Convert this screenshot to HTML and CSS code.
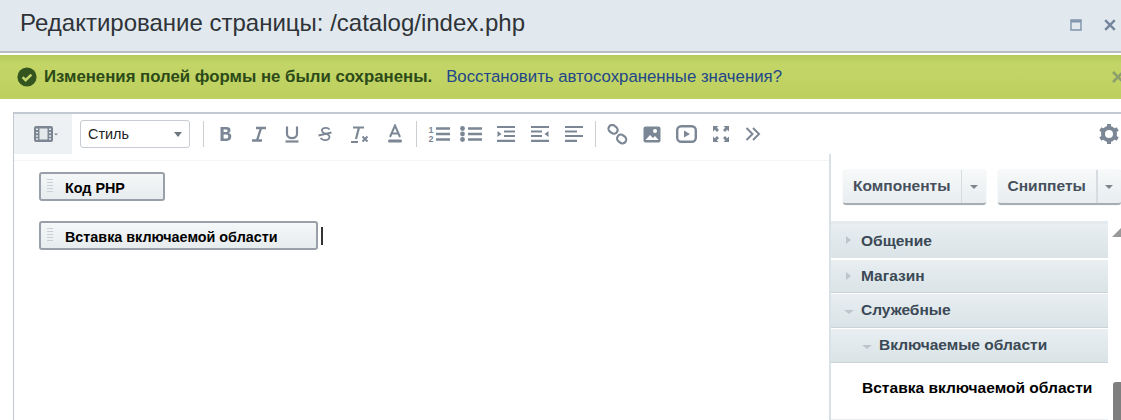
FILE: index.html
```html
<!DOCTYPE html>
<html lang="ru">
<head>
<meta charset="utf-8">
<title>Редактирование страницы</title>
<link rel="stylesheet" href="styles.css">
</head>
<body>
<header class="head">
  <h1 class="title">Редактирование страницы: /catalog/index.php</h1>
  <div class="win">
    <svg width="12" height="12" viewBox="0 0 12 12"><path d="M1 1h10v10H1z" fill="none" stroke="#7f93ad" stroke-width="1.4"/><path d="M1 2.5h10" stroke="#7f93ad" stroke-width="2"/></svg>
    <svg class="win-x" width="12" height="12" viewBox="0 0 12 12"><path d="M1.2 1.2l9.6 9.6M10.8 1.2l-9.6 9.6" stroke="#74859c" stroke-width="2.4"/></svg>
  </div>
</header>
<div class="notify">
  <svg class="ok" width="20" height="20" viewBox="0 0 20 20"><circle cx="10" cy="10" r="9.6" fill="#33541f"/><path d="M5.6 10.2l3 3 5.8-5.6" fill="none" stroke="#c3d56d" stroke-width="2.6"/></svg>
  <b class="msg">Изменения полей формы не были сохранены.</b>
  <a class="restore">Восстановить автосохраненные значения?</a>
  <svg class="nx" width="12" height="12" viewBox="0 0 12 12"><path d="M1 1l10 10M11 1L1 11" stroke="#8d9f6b" stroke-width="2.6"/></svg>
</div>
<main class="editor">
  <div class="toolbar">
    <div class="film">
      <svg width="26" height="18" viewBox="0 0 26 18"><rect x="1" y="1" width="19" height="16" rx="2" fill="#7d8794"/><rect x="6.500" y="3.500" width="8" height="11" fill="#e6e9ec"/><path d="M3 4.200h2M3 7.600h2M3 11h2M3 14h2M16 4.200h2M16 7.600h2M16 11h2M16 14h2" stroke="#e6e9ec" stroke-width="1.400"/><path d="M21 8.500h4l-2 2z" fill="#7d8794"/></svg>
    </div>
    <div class="select"><span>Стиль</span><i class="caret"></i></div>
    <i class="sep s1"></i>
    <div class="tools t1">
      <svg width="16" height="18" viewBox="0 0 16 18"><path d="M2.500 2h6c2.500 0 4 1.200 4 3.200 0 1.400-.7 2.300-1.900 2.700 1.700.3 2.700 1.500 2.700 3.200C13.300 14.400 11.500 16 8.800 16H2.500zM5.600 4.400v2.700h2.400c1 0 1.500-.5 1.500-1.350S9 4.400 8 4.400zM5.600 9.400v4.200h2.800c1.200 0 1.800-.7 1.800-2.100s-.6-2.100-1.800-2.100z" fill="#7c8795" fill-rule="evenodd"/></svg>
      <svg width="16" height="18" viewBox="0 0 16 18"><path d="M5 3h10M1 15.500h10M10 3L6 15.500" stroke="#7c8795" stroke-width="2.400" fill="none"/></svg>
      <svg width="16" height="18" viewBox="0 0 16 18"><path d="M3 1.500v7.500c0 5.500 10 5.500 10 0V1.500" stroke="#7c8795" stroke-width="2.200" fill="none"/><path d="M1.500 16.500h13" stroke="#7c8795" stroke-width="2.200"/></svg>
      <svg width="16" height="18" viewBox="0 0 16 18"><path d="M12.500 4.500C11.500 2.800 8 2.300 6 3.500S4.500 7.500 8 8.500s5.500 2.500 4 5S5.500 15.500 3.500 13M1.500 10.500l13-3" stroke="#7c8795" stroke-width="1.800" fill="none"/></svg>
      <svg width="20" height="18" viewBox="0 0 20 18"><path d="M3 2.500h11M9 2.500L6 14M1 17h7" stroke="#7c8795" stroke-width="2.200" fill="none"/><path d="M12.500 11.500l5 5M17.500 11.500l-5 5" stroke="#7c8795" stroke-width="2"/></svg>
      <svg width="16" height="20" viewBox="0 0 16 20"><path d="M3 13L8 1.500 13 13M4.800 9.500h6.400" stroke="#7c8795" stroke-width="2" fill="none"/><rect x="1" y="15.500" width="14" height="3" rx="1.500" fill="#7c8795"/></svg>
    </div>
    <i class="sep s2"></i>
    <div class="tools t2">
      <svg width="22" height="18" viewBox="0 0 22 18"><path d="M8 3.500h14M8 9h14M8 14.500h14" stroke="#7c8795" stroke-width="2.400"/><text x="0.500" y="8" class="num">1</text><text x="0.500" y="17" class="num">2</text></svg>
      <svg width="22" height="18" viewBox="0 0 22 18"><path d="M8 3.500h14M8 9h14M8 14.500h14" stroke="#7c8795" stroke-width="2.400"/><circle cx="2.500" cy="3.500" r="2.400" fill="#7c8795"/><circle cx="2.500" cy="9" r="2.400" fill="#7c8795"/><circle cx="2.500" cy="14.500" r="2.400" fill="#7c8795"/></svg>
      <svg class="wide" width="20" height="18" viewBox="0 0 20 18"><path d="M1 2h18M8 6.500h11M8 11h11M1 15.800h18" stroke="#7c8795" stroke-width="2.200"/><path d="M1.500 6l4 3-4 3z" fill="#7c8795"/></svg>
      <svg class="wide" width="20" height="18" viewBox="0 0 20 18"><path d="M1 2h18M1 6.500h11M1 11h11M1 15.800h18" stroke="#7c8795" stroke-width="2.200"/><path d="M18.500 6l-4 3 4 3z" fill="#7c8795"/></svg>
      <svg class="wide" width="20" height="18" viewBox="0 0 20 18"><path d="M1 2h18M1 6.500h12M1 11h18M1 15.800h12" stroke="#7c8795" stroke-width="2.200"/></svg>
    </div>
    <i class="sep s3"></i>
    <div class="tools t3">
      <svg width="21" height="21" viewBox="0 0 21 21"><g fill="none" stroke="#7c8795" stroke-width="2.200"><rect x="1.500" y="1.500" width="9.500" height="7.500" rx="3.700" transform="rotate(38 6 5)"/><rect x="10" y="11.500" width="9.500" height="7.500" rx="3.700" transform="rotate(38 15 15)"/></g></svg>
      <svg width="18" height="17" viewBox="0 0 18 17"><rect x="0.500" y="0.500" width="17" height="16" rx="2" fill="#7c8795"/><path d="M2.500 14l4.500-5 3 3 2-2 3.500 4z" fill="#fff"/><circle cx="12" cy="5" r="2" fill="#fff"/></svg>
      <svg width="21" height="18" viewBox="0 0 21 18"><rect x="1.200" y="1.200" width="18.600" height="15.600" rx="4" fill="none" stroke="#7c8795" stroke-width="2.400"/><path d="M8 5.500l6 3.500-6 3.500z" fill="#7c8795"/></svg>
      <svg width="18" height="18" viewBox="0 0 18 18"><path d="M1 1h5.500L4.800 2.800 7 5 5 7 2.800 4.800 1 6.500zM17 1v5.500l-1.800-1.700L13 7l-2-2 2.200-2.200L11.500 1zM1 17v-5.500l1.800 1.700L5 11l2 2-2.200 2.200L6.500 17zM17 17h-5.500l1.700-1.800L11 13l2-2 2.200 2.200 1.800-1.700z" fill="#7c8795"/></svg>
      <svg width="16" height="14" viewBox="0 0 16 14"><path d="M1.500 1l6 6-6 6M8 1l6 6-6 6" fill="none" stroke="#7c8795" stroke-width="2"/></svg>
    </div>
    <svg class="gear" width="20" height="20" viewBox="0 0 20 20"><circle cx="10" cy="10" r="6" fill="none" stroke="#7c8795" stroke-width="4"/><path d="M10 0v3M10 17v3M1.300 5l2.600 1.500M16.100 13.500l2.600 1.500M1.300 15l2.600-1.500M16.100 6.500L18.700 5" stroke="#7c8795" stroke-width="4"/></svg>
  </div>
  <div class="work">
    <div class="content">
      <div class="blocks">
        <div class="block"><i class="grip"></i><b>Код PHP</b></div>
        <div class="line">
          <div class="block"><i class="grip"></i><b>Вставка включаемой области</b></div>
          <i class="cursor"></i>
        </div>
      </div>
    </div>
    <aside class="side">
      <div class="btns">
        <div class="btn b1"><span class="lbl">Компоненты</span><span class="arr"><i class="caret c2"></i></span></div>
        <div class="btn b2"><span class="lbl">Сниппеты</span><span class="arr"><i class="caret c2"></i></span></div>
      </div>
      <div class="listwrap">
        <div class="list">
          <div class="row r1"><i class="tri right"></i>Общение</div>
          <div class="row r2"><i class="tri right"></i>Магазин</div>
          <div class="row r3"><i class="tri down"></i>Служебные</div>
          <div class="row sub"><i class="tri down"></i>Включаемые области</div>
          <div class="leaf">Вставка включаемой области</div>
        </div>
        <div class="scroll"><i class="up"></i><i class="thumb"></i></div>
      </div>
    </aside>
  </div>
</main>
</body>
</html>
```
FILE: styles.css
```css
* { box-sizing: border-box; }
html, body { margin: 0; height: 420px; overflow: hidden; background: #fff; font-family: "Liberation Sans", Arial, sans-serif; }
.head { height: 53px; background: #e1e9ee; box-shadow: inset 0 -2px 0 #b9bcc0; display: flex; align-items: flex-start; justify-content: space-between; padding: 9px 5px 0 20px; }
.title { margin: 0; font-size: 24px; line-height: 28px; font-weight: 400; color: #2f3338; }
.win { display: flex; gap: 22px; padding-top: 10px; }
.notify { margin-top: 2px; height: 44px; background: linear-gradient(#b4c95c, #c2d566 20%, #bdd05f); display: flex; align-items: center; padding: 0 0 0 17px; position: relative; }
.ok { flex: none; margin-right: 7px; }
.msg { font-size: 16.800px; color: #2c4a18; font-weight: 700; margin-right: 14px; white-space: nowrap; }
.restore { font-size: 16.800px; color: #22468a; white-space: nowrap; }
.nx { position: absolute; right: -3px; top: 16px; }
.editor { margin: 13px 0 0 13px; border-top: 2px solid #c2c9d2; border-left: 1px solid #c2c9d2; }
.toolbar { height: 40px; display: flex; align-items: center; position: relative; }
.film { width: 58px; height: 40px; align-self: flex-start; background: #eef1f3; display: flex; align-items: center; justify-content: center; padding-left: 6px; }
.select { width: 110px; height: 28px; margin-left: 8px; border: 1px solid #c6ccd2; border-radius: 3px; display: flex; align-items: center; justify-content: space-between; padding: 0 7px; font-size: 14.400px; color: #222; }
.caret { display: block; width: 0; height: 0; border: 4.500px solid transparent; border-top: 5px solid #6f7882; border-bottom: 0; }
.sep { display: block; width: 1px; height: 26px; background: #c9ced3; flex: none; }
.s1 { margin-left: 13px; }
.tools { display: flex; align-items: center; }
.t1 { margin-left: 14px; gap: 17px; }
.s2 { margin-left: 13px; }
.t2 { margin-left: 11px; gap: 10px; }
.t2 .wide { margin-left: 4px; }
.s3 { margin-left: 11px; }
.t3 { margin-left: 11px; gap: 15px; }
.num { font: 700 9px "Liberation Sans", sans-serif; fill: #7c8795; }
.gear { position: absolute; right: 2px; top: 10px; }
.work { display: flex; align-items: flex-start; }
.content { flex: 1; min-width: 0; margin-top: 6px; border-top: 1px solid #f3f4f5; padding: 11px 0 0 25px; }
.blocks { display: flex; flex-direction: column; gap: 20px; }
.line { display: flex; align-items: center; gap: 3px; }
.block { height: 29px; width: max-content; min-width: 126px; border: 2px solid #9aa0aa; border-radius: 3px; background: linear-gradient(#f5f7f8, #e7ecef); display: flex; align-items: center; padding: 2px 38px 0 24px; position: relative; font-size: 14.350px; color: #000; }
.grip { position: absolute; left: 6px; top: 5px; width: 6px; height: 15px; background: repeating-linear-gradient(#c9cfd3 0 1px, transparent 1px 3px); }
.cursor { display: block; width: 2px; height: 18px; background: #333; margin-top: 1px; }
.side { width: 292px; flex: none; height: 266px; border-left: 2px solid #d7e1e6; display: flex; flex-direction: column; }
.btns { display: flex; padding: 16px 0 0 12px; gap: 12px; white-space: nowrap; }
.btn { height: 35px; display: flex; border-radius: 3px; background: linear-gradient(#f7f9f9, #e8edf0); border-bottom: 2px solid #a7adb3; box-shadow: 0 0 1px #b9c0c6; font-size: 15.550px; font-weight: 700; color: #46505c; }
.lbl { display: flex; align-items: center; padding: 0 10px 2px; }
.arr { width: 25px; display: flex; align-items: center; justify-content: center; border-left: 1px solid #d6dce0; }
.b2 .arr { border-left-width: 2px; }
.c2 { border-width: 4px; border-top-width: 4px; border-bottom: 0; border-top-color: #7e858d; }
.listwrap { display: flex; margin-top: 16px; }
.list { width: 277px; flex: none; border-top: 3px solid #e4eaed; }
.row { height: 34px; background: linear-gradient(#e9eef1, #e2eaed 40%, #dae3e6); border-bottom: 1px solid #c9d3d8; padding-left: 30px; display: flex; align-items: center; position: relative; font-size: 15.500px; font-weight: 700; color: #3b4855; }
.r1 { border-bottom: 0; margin-bottom: 2px; }
.r2 { height: 33px; margin-bottom: 1px; }
.r3 { margin-bottom: 1px; padding-bottom: 2px; }
.sub { padding-left: 48px; padding-bottom: 2px; }
.leaf { padding: 16px 0 0 31px; font-size: 15.550px; font-weight: 700; color: #000; height: 57px; border-bottom: 1px solid #eceff1; white-space: nowrap; }
.tri { display: block; position: absolute; width: 0; height: 0; border-style: solid; border-color: transparent; }
.right { left: 15px; top: 12px; border-width: 4px 0 4px 5px; border-left-color: #bcc6cb; }
.down { left: 13px; top: 16px; border-width: 4px 5px 0; border-top-color: #bcc6cb; }
.sub .down { left: 31px; }
.scroll { width: 14px; position: relative; }
.up { position: absolute; right: 0; top: 7px; width: 0; height: 0; border-style: solid; border-width: 0 0 9px 9px; border-color: transparent transparent #999 transparent; }
.thumb { position: absolute; right: 0; top: 161px; width: 8px; height: 38px; background: #7f7f7f; border-radius: 3px 0 0 0; }
```
